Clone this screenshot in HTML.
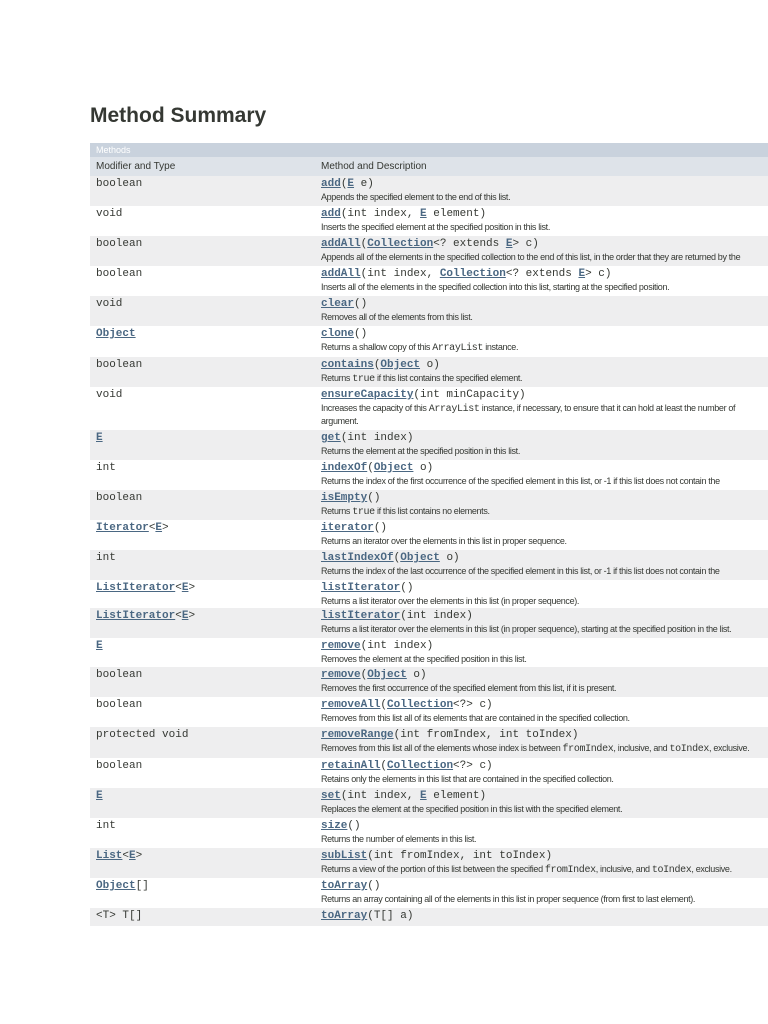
<!DOCTYPE html><html><head><meta charset="utf-8"><style>
body{margin:0;width:768px;height:1024px;overflow:hidden;background:#fff;position:relative;font-family:"Liberation Sans",sans-serif}
h1{position:absolute;left:90px;top:104px;margin:0;font-size:21px;font-weight:bold;color:#353833}
.band{position:absolute;left:90px;width:700px}
.r{position:absolute;left:90px;width:700px;white-space:nowrap}
.g{background:#eeeeef}
.t{position:absolute;left:6px;top:2px;font:11px "Liberation Mono",monospace;color:#353833}
.m{position:absolute;left:231px;top:2px;font:11px "Liberation Mono",monospace;color:#353833}
.d{position:absolute;left:231px;top:15px;font-size:9px;color:#353833;letter-spacing:-0.35px;line-height:12px}
a{color:#4a6782;font-weight:bold;text-decoration:underline}
code{font:10px "Liberation Mono",monospace}
</style></head><body>
<h1>Method Summary</h1>
<div class="band" style="top:143px;height:14px;background:#c9d2dd;color:#fff;font-size:9px;padding-left:6px;line-height:14px;box-sizing:border-box">Methods</div>
<div class="band" style="top:157px;height:19px;background:#dee3e9;font-size:10px;color:#353833;line-height:19px"><span style="position:absolute;left:6px">Modifier and Type</span><span style="position:absolute;left:231px">Method and Description</span></div>

<div class="r g" style="top:176px;height:30px"><span class="t">boolean</span><span class="m"><a>add</a>(<a>E</a> e)</span><span class="d">Appends the specified element to the end of this list.</span></div>
<div class="r" style="top:206px;height:30px"><span class="t">void</span><span class="m"><a>add</a>(int index, <a>E</a> element)</span><span class="d">Inserts the specified element at the specified position in this list.</span></div>
<div class="r g" style="top:236px;height:30px"><span class="t">boolean</span><span class="m"><a>addAll</a>(<a>Collection</a>&lt;? extends <a>E</a>&gt; c)</span><span class="d">Appends all of the elements in the specified collection to the end of this list, in the order that they are returned by the</span></div>
<div class="r" style="top:266px;height:30px"><span class="t">boolean</span><span class="m"><a>addAll</a>(int index, <a>Collection</a>&lt;? extends <a>E</a>&gt; c)</span><span class="d">Inserts all of the elements in the specified collection into this list, starting at the specified position.</span></div>
<div class="r g" style="top:296px;height:30px"><span class="t">void</span><span class="m"><a>clear</a>()</span><span class="d">Removes all of the elements from this list.</span></div>
<div class="r" style="top:326px;height:31px"><span class="t"><a>Object</a></span><span class="m"><a>clone</a>()</span><span class="d">Returns a shallow copy of this <code>ArrayList</code> instance.</span></div>
<div class="r g" style="top:357px;height:30px"><span class="t">boolean</span><span class="m"><a>contains</a>(<a>Object</a> o)</span><span class="d">Returns <code>true</code> if this list contains the specified element.</span></div>
<div class="r" style="top:387px;height:43px"><span class="t">void</span><span class="m"><a>ensureCapacity</a>(int minCapacity)</span><span class="d">Increases the capacity of this <code>ArrayList</code> instance, if necessary, to ensure that it can hold at least the number of<br>argument.</span></div>
<div class="r g" style="top:430px;height:30px"><span class="t"><a>E</a></span><span class="m"><a>get</a>(int index)</span><span class="d">Returns the element at the specified position in this list.</span></div>
<div class="r" style="top:460px;height:30px"><span class="t">int</span><span class="m"><a>indexOf</a>(<a>Object</a> o)</span><span class="d">Returns the index of the first occurrence of the specified element in this list, or -1 if this list does not contain the</span></div>
<div class="r g" style="top:490px;height:30px"><span class="t">boolean</span><span class="m"><a>isEmpty</a>()</span><span class="d">Returns <code>true</code> if this list contains no elements.</span></div>
<div class="r" style="top:520px;height:30px"><span class="t"><a>Iterator</a>&lt;<a>E</a>&gt;</span><span class="m"><a>iterator</a>()</span><span class="d">Returns an iterator over the elements in this list in proper sequence.</span></div>
<div class="r g" style="top:550px;height:30px"><span class="t">int</span><span class="m"><a>lastIndexOf</a>(<a>Object</a> o)</span><span class="d">Returns the index of the last occurrence of the specified element in this list, or -1 if this list does not contain the</span></div>
<div class="r" style="top:580px;height:28px"><span class="t"><a>ListIterator</a>&lt;<a>E</a>&gt;</span><span class="m"><a>listIterator</a>()</span><span class="d">Returns a list iterator over the elements in this list (in proper sequence).</span></div>
<div class="r g" style="top:608px;height:30px"><span class="t"><a>ListIterator</a>&lt;<a>E</a>&gt;</span><span class="m"><a>listIterator</a>(int index)</span><span class="d">Returns a list iterator over the elements in this list (in proper sequence), starting at the specified position in the list.</span></div>
<div class="r" style="top:638px;height:29px"><span class="t"><a>E</a></span><span class="m"><a>remove</a>(int index)</span><span class="d">Removes the element at the specified position in this list.</span></div>
<div class="r g" style="top:667px;height:30px"><span class="t">boolean</span><span class="m"><a>remove</a>(<a>Object</a> o)</span><span class="d">Removes the first occurrence of the specified element from this list, if it is present.</span></div>
<div class="r" style="top:697px;height:30px"><span class="t">boolean</span><span class="m"><a>removeAll</a>(<a>Collection</a>&lt;?&gt; c)</span><span class="d">Removes from this list all of its elements that are contained in the specified collection.</span></div>
<div class="r g" style="top:727px;height:31px"><span class="t">protected void</span><span class="m"><a>removeRange</a>(int fromIndex, int toIndex)</span><span class="d">Removes from this list all of the elements whose index is between <code>fromIndex</code>, inclusive, and <code>toIndex</code>, exclusive.</span></div>
<div class="r" style="top:758px;height:30px"><span class="t">boolean</span><span class="m"><a>retainAll</a>(<a>Collection</a>&lt;?&gt; c)</span><span class="d">Retains only the elements in this list that are contained in the specified collection.</span></div>
<div class="r g" style="top:788px;height:30px"><span class="t"><a>E</a></span><span class="m"><a>set</a>(int index, <a>E</a> element)</span><span class="d">Replaces the element at the specified position in this list with the specified element.</span></div>
<div class="r" style="top:818px;height:30px"><span class="t">int</span><span class="m"><a>size</a>()</span><span class="d">Returns the number of elements in this list.</span></div>
<div class="r g" style="top:848px;height:30px"><span class="t"><a>List</a>&lt;<a>E</a>&gt;</span><span class="m"><a>subList</a>(int fromIndex, int toIndex)</span><span class="d">Returns a view of the portion of this list between the specified <code>fromIndex</code>, inclusive, and <code>toIndex</code>, exclusive.</span></div>
<div class="r" style="top:878px;height:30px"><span class="t"><a>Object</a>[]</span><span class="m"><a>toArray</a>()</span><span class="d">Returns an array containing all of the elements in this list in proper sequence (from first to last element).</span></div>
<div class="r g" style="top:908px;height:18px"><span class="t">&lt;T&gt; T[]</span><span class="m"><a>toArray</a>(T[] a)</span></div>
</body></html>
